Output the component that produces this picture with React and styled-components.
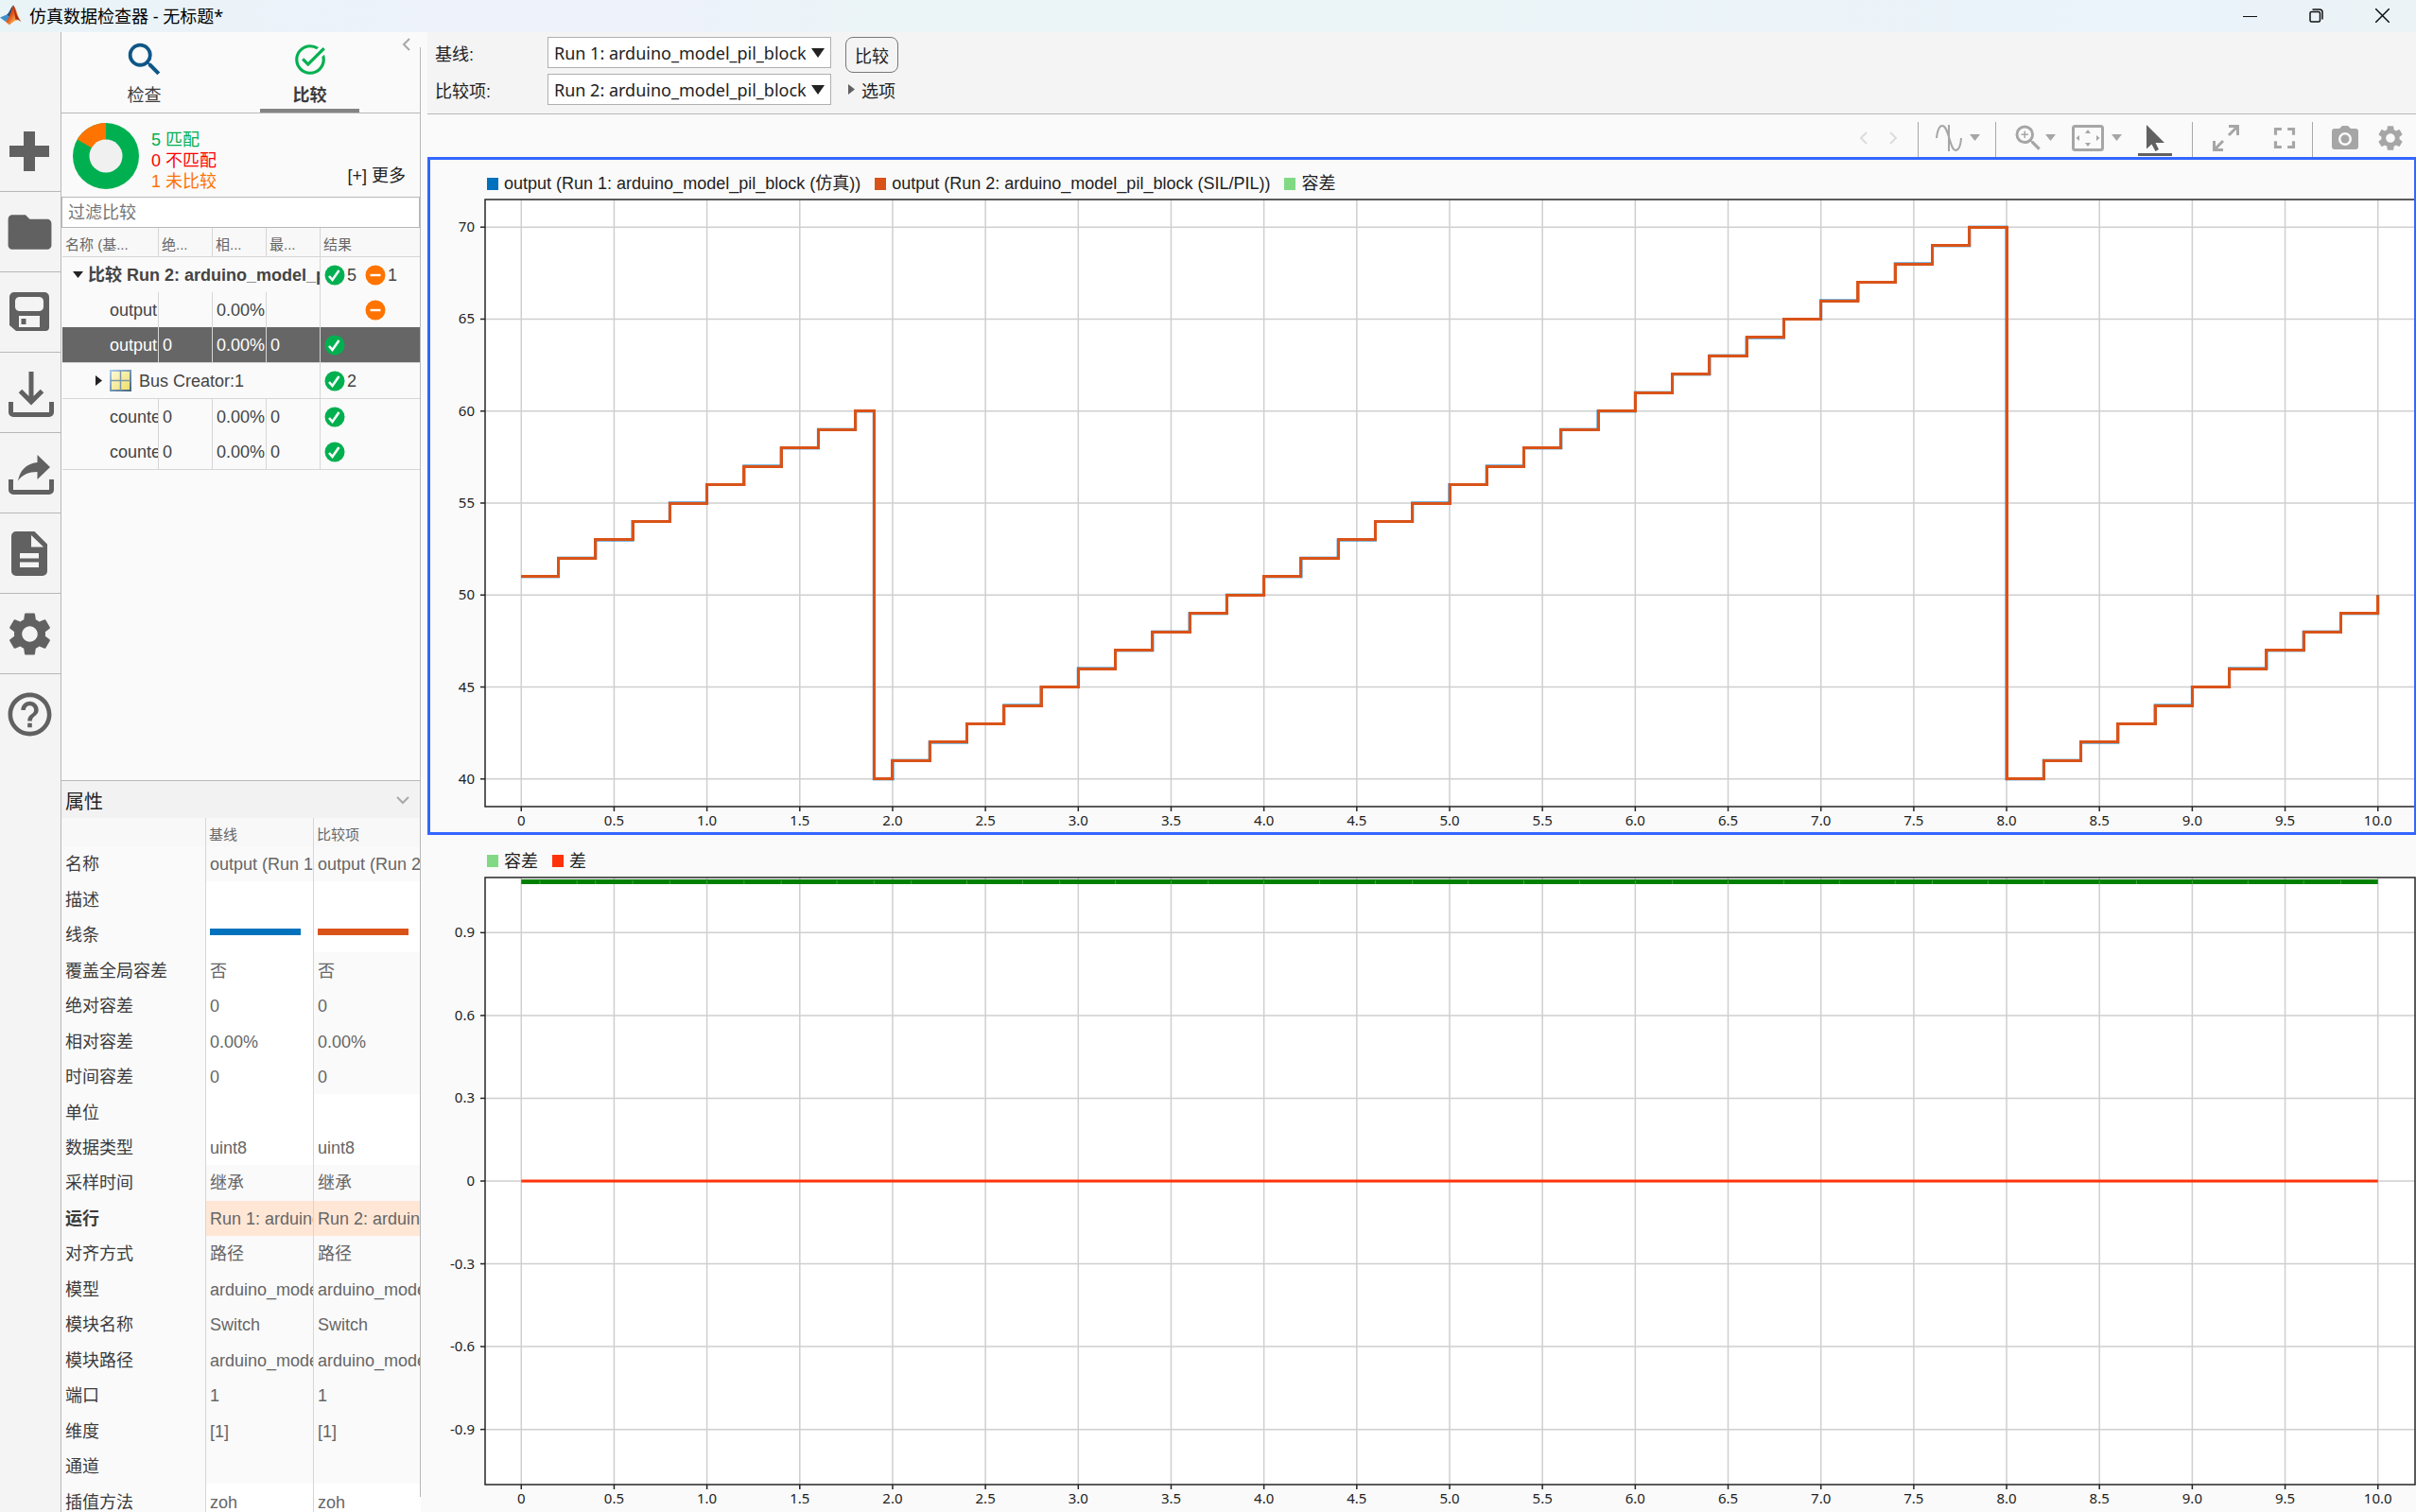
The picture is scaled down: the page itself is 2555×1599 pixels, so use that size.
import React, { useLayoutEffect, useRef, useState } from 'react';
import styled, { createGlobalStyle } from 'styled-components';
import { MdFolder, MdFullscreen, MdHelpOutline, MdSearch, MdSettings, MdTaskAlt, MdZoomIn } from 'react-icons/md';

const SANS = '"Liberation Sans", "Noto Sans CJK SC", sans-serif';
const UI = '"Noto Sans", "Noto Sans CJK SC", sans-serif';

const BLUE = '#0072bd';
const ORANGE = '#d95319';
const LIGHT_GREEN = '#81d984';
const RED = '#ff330a';

const properties = [
    { name: '名称', base: 'output (Run 1: arduino_model_pil_block)', other: 'output (Run 2: arduino_model_pil_block)' },
    { name: '描述', base: '', other: '', edit: 'both' },
    { name: '线条', line: true, edit: 'both' },
    { name: '覆盖全局容差', base: '否', other: '否', edit: 'base' },
    { name: '绝对容差', base: '0', other: '0', edit: 'base' },
    { name: '相对容差', base: '0.00%', other: '0.00%', edit: 'base' },
    { name: '时间容差', base: '0', other: '0', edit: 'base' },
    { name: '单位', base: '', other: '', edit: 'both' },
    { name: '数据类型', base: 'uint8', other: 'uint8', edit: 'both' },
    { name: '采样时间', base: '继承', other: '继承' },
    { name: '运行', base: 'Run 1: arduino_model_pil_block', other: 'Run 2: arduino_model_pil_block', differs: true },
    { name: '对齐方式', base: '路径', other: '路径' },
    { name: '模型', base: 'arduino_model_pil_block', other: 'arduino_model_pil_block' },
    { name: '模块名称', base: 'Switch', other: 'Switch' },
    { name: '模块路径', base: 'arduino_model_pil_block/Switch', other: 'arduino_model_pil_block/Switch' },
    { name: '端口', base: '1', other: '1' },
    { name: '维度', base: '[1]', other: '[1]' },
    { name: '通道', base: '', other: '' },
    { name: '插值方法', base: 'zoh', other: 'zoh', edit: 'both' },
];

// counter output as [time, value], held until the next point
const buildSteps = () => {
    const pts = [];
    for (let i = 0; i < 10; i++) pts.push([i * 0.2, 51 + i]);
    pts.push([1.9, 40]);
    for (let i = 0; i < 30; i++) pts.push([2 + i * 0.2, 41 + i]);
    for (let i = 0; i < 11; i++) pts.push([8 + i * 0.2, 40 + i]);
    return pts;
};
const steps = buildSteps();

const stepPath = (x, y) =>
    steps.map(([t, v], i) => (i === 0 ? `M${x(t)},${y(v)}` : `H${x(t)}V${y(v)}`)).join('');

// centre of the nearest pixel, keeps a 3px stroke crisp
const snap = (scale) => (v) => Math.floor(scale(v)) + 0.5;

/* ---------- icons ---------- */

const MatlabLogo = () => (
    <svg width="23" height="22" viewBox="0 0 23 22" aria-hidden="true">
        <defs>
            <linearGradient id="peak" x1="0" x2="1" y1="0" y2="1">
                <stop offset="0" stopColor="#7c1d12" />
                <stop offset="0.45" stopColor="#e4571b" />
                <stop offset="0.7" stopColor="#f7b052" />
                <stop offset="1" stopColor="#b02a12" />
            </linearGradient>
        </defs>
        <path d="M0 13.5 L7 10.5 L11 14 L6 18 Z" fill="#3f8fc9" />
        <path d="M7 10.5 C10 9 11 3 14 0.5 L11 14 Z" fill="#2b4f7d" />
        <path d="M14 0.5 C17 3 19 14 22.5 18 C19 14.500 15 17 10 21.500 L6 18 C10 15 12 6 14 0.5 Z" fill="url(#peak)" />
        <path d="M14 0.5 C15.500 3 17 12 22.5 18 C20 16 18 15 16.500 16 C15.500 10 15 5 14 0.5 Z" fill="#a52a14" />
    </svg>
);

const PlusIcon = () => (
    <svg width="42" height="42" viewBox="0 0 42 42" aria-hidden="true">
        <path d="M15 0h12v15h15v12H27v15H15V27H0V15h15z" fill="currentColor" />
    </svg>
);

const SaveIcon = () => (
    <svg width="42" height="42" viewBox="0 0 42 42" aria-hidden="true">
        <path
            fillRule="evenodd"
            fill="currentColor"
            d="M5 0h32a5 5 0 0 1 5 5v32a4 4 0 0 1-4 4H7l-7-6V5a5 5 0 0 1 5-5zM11 5a5 5 0 0 0-5 4v7a5 5 0 0 0 5 4h20a5 5 0 0 0 5-4V9a5 5 0 0 0-5-4zM10 25v12h22V25zM12.500 28h5v6h-5z"
        />
    </svg>
);

const ImportIcon = () => (
    <svg width="52" height="52" viewBox="-4 -4 52 52" fill="none" stroke="currentColor" aria-hidden="true">
        <path d="M2.500 32v11a2.500 2.500 0 0 0 2.500 2.500h38a2.500 2.500 0 0 0 2.500-2.500V32" strokeWidth="5" />
        <path d="M24 0v32M12.500 20.500L24 32l11.500-11.500" strokeWidth="5" />
    </svg>
);

const ExportIcon = () => (
    <svg width="52" height="46" viewBox="-4 -4 52 46" fill="none" aria-hidden="true">
        <path d="M2.500 26v11a2.500 2.500 0 0 0 2.500 2.500h38a2.500 2.500 0 0 0 2.500-2.500V26" strokeWidth="5" stroke="currentColor" />
        <path d="M30.500 0l13.500 13-13.500 13v-8c-9 0-16 3-20.500 9.500C12 17 18 9.500 30.500 8z" fill="currentColor" />
    </svg>
);

const ReportIcon = () => (
    <svg width="38" height="47" viewBox="0 0 38 47" aria-hidden="true">
        <path
            fillRule="evenodd"
            fill="currentColor"
            d="M5 0h19.500L38 13.500V42a5 5 0 0 1-5 5H5a5 5 0 0 1-5-5V5a5 5 0 0 1 5-5zM21 4v12.500h13zM9 23v5.500h20V23zM9 32.500V38h20v-5.500z"
        />
    </svg>
);

const CheckBadge = () => (
    <svg width="22" height="22" viewBox="0 0 22 22" role="img" aria-label="匹配">
        <circle cx="11" cy="11" r="10.5" fill="#00b050" />
        <path d="M5 12l3.500 4L15.500 6" fill="none" stroke="#fff" strokeWidth="2.600" />
    </svg>
);

const MinusBadge = () => (
    <svg width="22" height="22" viewBox="0 0 22 22" role="img" aria-label="未比较">
        <circle cx="11" cy="11" r="10.5" fill="#ff7300" />
        <path d="M5.500 11h11" stroke="#fff" strokeWidth="2.400" />
    </svg>
);

const BusIcon = () => (
    <svg width="23" height="23" viewBox="0 0 23 23" aria-hidden="true">
        <defs>
            <linearGradient id="bus" x1="0" x2="1" y1="0" y2="1">
                <stop offset="0" stopColor="#fdfbe0" />
                <stop offset="1" stopColor="#eedd60" />
            </linearGradient>
            <linearGradient id="busEdge" x1="0" x2="1" y1="0" y2="1">
                <stop offset="0" stopColor="#a9c8ea" />
                <stop offset="1" stopColor="#47687f" />
            </linearGradient>
        </defs>
        <rect x="1" y="1" width="21" height="21" fill="url(#bus)" stroke="url(#busEdge)" strokeWidth="2" />
        <path d="M11.500 1v21M1 11.500h21" stroke="#7d96a8" strokeWidth="1.500" />
    </svg>
);

const ArrowDown = () => (
    <svg width="11" height="7" viewBox="0 0 11 7" aria-hidden="true"><path d="M0 0h11L5.500 7z" fill="currentColor" /></svg>
);

const ArrowRight = () => (
    <svg width="7" height="11" viewBox="0 0 7 11" aria-hidden="true"><path d="M0 0v11l7-5.500z" fill="currentColor" /></svg>
);

const Chevron = ({ d, w, h, stroke = 2 }) => (
    <svg width={w} height={h} viewBox={`0 0 ${w} ${h}`} fill="none" stroke="currentColor" strokeWidth={stroke} aria-hidden="true">
        <path d={d} />
    </svg>
);

const WaveIcon = () => (
    <svg width="28" height="30" viewBox="0 0 28 30" fill="none" stroke="currentColor" strokeWidth="2" aria-hidden="true">
        <path d="M1 15C2 6 4 2 7 2c7 0 8 26 14 26 4 0 5.500-6 6-13M14 1v28" />
    </svg>
);

const FitIcon = () => (
    <svg width="34" height="28" viewBox="0 0 34 28" aria-hidden="true">
        <rect x="1.500" y="1.500" width="31" height="25" rx="2" fill="none" stroke="currentColor" strokeWidth="3" />
        <path d="M17 5l3 4h-6zM17 23l3-4h-6zM4.500 14l3.500-3v6zM29.500 14L26 11v6z" fill="currentColor" />
    </svg>
);

const CursorIcon = () => (
    <svg width="20" height="28" viewBox="-1 0 20 28" aria-hidden="true">
        <path d="M0 0v25.500l5.500-5 4 7.500 3.500-2-3.500-7H19z" fill="currentColor" />
    </svg>
);

const ExpandIcon = () => (
    <svg width="28" height="28" viewBox="0 0 28 28" fill="none" stroke="currentColor" strokeWidth="3" aria-hidden="true">
        <path d="M17 1.500h9.500V11M26 2l-9 9M1.500 17v9.500H11M2 26l9-9" />
    </svg>
);

const CameraIcon = () => (
    <svg width="28" height="26" viewBox="0 0 28 26" aria-hidden="true">
        <path
            fillRule="evenodd"
            fill="currentColor"
            d="M8 3l3-3h6l3 3h5a3 3 0 0 1 3 3v16a3 3 0 0 1-3 3H3a3 3 0 0 1-3-3V6a3 3 0 0 1 3-3zM14 7a7 7 0 1 0 0 14a7 7 0 1 0 0-14z"
        />
        <circle cx="14" cy="14" r="4.500" fill="currentColor" />
    </svg>
);

const Donut = () => (
    <svg width="70" height="70" viewBox="0 0 70 70" role="img" aria-label="5 匹配, 1 未比较">
        <circle cx="35" cy="35" r="35" fill="#00b050" />
        <path d="M35 35V0A35 35 0 0 0 4.690 17.500z" fill="#ff7300" />
        <circle cx="35" cy="35" r="17.500" fill="#f0f0f0" />
    </svg>
);

/* ---------- plots ---------- */

const useSize = () => {
    const ref = useRef(null);
    const [size, setSize] = useState([0, 0]);
    useLayoutEffect(() => {
        const measure = () => setSize([ref.current.clientWidth, ref.current.clientHeight]);
        measure();
        const observer = new ResizeObserver(measure);
        observer.observe(ref.current);
        return () => observer.disconnect();
    }, []);
    return [ref, size];
};

const xTicks = Array.from({ length: 21 }, (_, i) => i / 2);

const Plot = ({ min, max, ticks, children }) => {
    const [ref, [w, h]] = useSize();
    const left = 61;
    const right = w - 1;
    const top = 1;
    const bottom = h - 30;
    const x = (t) => left - 1 + ((t + 0.2) / 10.4) * (right - left + 1);
    const y = (v) => bottom - ((v - min) / (max - min)) * (bottom - top);

    return (
        <PlotArea ref={ref}>
            {w > 0 && (
                <svg width={w} height={h}>
                    <rect x={left} y={top} width={right - left} height={bottom - top} fill="#fff" />
                    <g stroke="#cfcfcf" strokeWidth="1.500">
                        {xTicks.map((t) => <line key={t} x1={x(t)} x2={x(t)} y1={top} y2={bottom} />)}
                        {ticks.map((v) => <line key={v} x1={left} x2={right} y1={y(v)} y2={y(v)} />)}
                    </g>
                    <rect x={left} y={top} width={right - left} height={bottom - top} fill="none" stroke="#262626" strokeWidth="1.500" />
                    {children(x, y)}
                    <g stroke="#262626" strokeWidth="1.500">
                        {xTicks.map((t) => <line key={t} x1={x(t)} x2={x(t)} y1={bottom} y2={bottom + 5} />)}
                        {ticks.map((v) => <line key={v} x1={left - 5} x2={left} y1={y(v)} y2={y(v)} />)}
                    </g>
                    {xTicks.map((t) => (
                        <TickText key={t} x={x(t)} y={bottom + 20} textAnchor="middle">{t === 0 ? '0' : t.toFixed(1)}</TickText>
                    ))}
                    {ticks.map((v) => (
                        <TickText key={v} x={left - 11} y={y(v) + 5} textAnchor="end">{v}</TickText>
                    ))}
                </svg>
            )}
        </PlotArea>
    );
};

const bandMarks = [0.1, 0.3, 0.4, 0.6, 0.8, 1, 1.2, 1.4, 1.7, 1.9, 2.1, 2.4, 2.7, 2.9, 3.2, 3.5, 3.7, 4, 4.3, 4.6, 4.8, 5.1, 5.4, 5.7, 6, 6.2, 6.5, 6.8, 7.1, 7.4, 7.6, 7.9, 8.2, 8.5, 8.7, 9, 9.3, 9.6, 9.8];

export default function App() {
    return (
        <>
            <GlobalStyle />
            <Window>
                <TitleBar>
                    <Title><MatlabLogo />仿真数据检查器 - 无标题*</Title>
                    <WindowButton aria-label="最小化"><Chevron d="M0 8.500h15" w={15} h={15} stroke={1} /></WindowButton>
                    <WindowButton aria-label="还原">
                        <svg width="15" height="15" viewBox="0 0 15 15" fill="none" stroke="#111" strokeWidth="1.500">
                            <rect x="1" y="3.500" width="10.500" height="10.500" rx="1.500" />
                            <path d="M3.500 1H11a3 3 0 0 1 3 3v7.500" />
                        </svg>
                    </WindowButton>
                    <WindowButton aria-label="关闭"><Chevron d="M0 0l15 15M15 0L0 15" w={15} h={15} stroke={1.5} /></WindowButton>
                </TitleBar>
                <Body>
                    <Rail>
                        <RailButton aria-label="新建"><PlusIcon /></RailButton>
                        <RailButton aria-label="打开"><MdFolder size={55} /></RailButton>
                        <RailButton aria-label="保存"><SaveIcon /></RailButton>
                        <RailButton aria-label="导入"><ImportIcon /></RailButton>
                        <RailButton aria-label="导出"><ExportIcon /></RailButton>
                        <RailButton aria-label="报告"><ReportIcon /></RailButton>
                        <RailButton aria-label="预设"><MdSettings size={55} /></RailButton>
                        <RailButton aria-label="帮助"><MdHelpOutline size={55} /></RailButton>
                    </Rail>
                    <SidePanel />
                    <Main>
                        <CompareBar />
                        <PlotToolbar />
                        <Plots>
                            <PlotCell $active>
                                <Legend>
                                    <LegendItem $color={BLUE}>output (Run 1: arduino_model_pil_block (仿真))</LegendItem>
                                    <LegendItem $color={ORANGE}>output (Run 2: arduino_model_pil_block (SIL/PIL))</LegendItem>
                                    <LegendItem $color={LIGHT_GREEN}>容差</LegendItem>
                                </Legend>
                                <Plot min={38.5} max={71.5} ticks={[40, 45, 50, 55, 60, 65, 70]}>
                                    {(x, y) => (
                                        <g fill="none" strokeWidth="3">
                                            <path d={stepPath(x, y)} stroke={BLUE} />
                                            <path d={stepPath(snap(x), snap(y))} stroke={ORANGE} />
                                        </g>
                                    )}
                                </Plot>
                            </PlotCell>
                            <PlotCell>
                                <Legend>
                                    <LegendItem $color={LIGHT_GREEN}>容差</LegendItem>
                                    <LegendItem $color={RED}>差</LegendItem>
                                </Legend>
                                <Plot min={-1.1} max={1.1} ticks={['-0.9', '-0.6', '-0.3', '0', '0.3', '0.6', '0.9']}>
                                    {(x, y) => (
                                        <>
                                            <rect x={x(0)} y={y(1.1) + 2} width={x(10) - x(0)} height="5" fill="#008000" />
                                            {bandMarks.map((t) => (
                                                <line key={t} x1={x(t)} x2={x(t)} y1={y(1.1) + 3} y2={y(1.1) + 7} stroke="#3f9f3f" />
                                            ))}
                                            <line x1={x(0)} x2={x(10)} y1={y(0)} y2={y(0)} stroke={RED} strokeWidth="3" />
                                        </>
                                    )}
                                </Plot>
                            </PlotCell>
                        </Plots>
                    </Main>
                </Body>
            </Window>
        </>
    );
}

function SidePanel() {
    return (
        <Side>
            <Tabs>
                <Tab $color="#0f5687"><MdSearch size={46} /><span>检查</span></Tab>
                <Tab $color="#00b050" $active><MdTaskAlt size={38} /><span>比较</span></Tab>
                <CollapseButton aria-label="折叠"><Chevron d="M8 1L2 7l6 6" w={9} h={14} /></CollapseButton>
            </Tabs>
            <Summary>
                <Donut />
                <Stats>
                    <Stat $color="#00b050">5 匹配</Stat>
                    <Stat $color="#ff0000">0 不匹配</Stat>
                    <Stat $color="#ff7300">1 未比较</Stat>
                </Stats>
                <MoreButton>[+] 更多</MoreButton>
            </Summary>
            <FilterInput type="text" placeholder="过滤比较" aria-label="过滤比较" />
            <RunsPane>
                <RunsTable>
                    <colgroup>
                        <col width="102" /><col width="57" /><col width="57" /><col width="57" /><col />
                    </colgroup>
                    <thead>
                        <tr>
                            <HeadCell>名称 (基...</HeadCell>
                            <HeadCell>绝...</HeadCell>
                            <HeadCell>相...</HeadCell>
                            <HeadCell>最...</HeadCell>
                            <HeadCell>结果</HeadCell>
                        </tr>
                    </thead>
                    <tbody>
                        <RunRow>
                            <RunCell colSpan={4}>
                                <TreeLabel $indent={11} $gap={5} $bold><ArrowDown />比较 Run 2: arduino_model_pil_block</TreeLabel>
                            </RunCell>
                            <RunCell><Results><CheckBadge /><b>5</b><MinusBadge /><b>1</b></Results></RunCell>
                        </RunRow>
                        <RunRow>
                            <RunCell><TreeLabel $indent={50}>output</TreeLabel></RunCell>
                            <RunCell />
                            <RunCell>0.00%</RunCell>
                            <RunCell />
                            <RunCell><Results><i /><b /><MinusBadge /></Results></RunCell>
                        </RunRow>
                        <RunRow $selected $line>
                            <RunCell><TreeLabel $indent={50}>output</TreeLabel></RunCell>
                            <RunCell>0</RunCell>
                            <RunCell>0.00%</RunCell>
                            <RunCell>0</RunCell>
                            <RunCell><Results><CheckBadge /></Results></RunCell>
                        </RunRow>
                        <RunRow $line>
                            <RunCell colSpan={4}>
                                <TreeLabel $indent={35} $gap={8}><ArrowRight /><BusIcon />Bus Creator:1</TreeLabel>
                            </RunCell>
                            <RunCell><Results><CheckBadge /><b>2</b></Results></RunCell>
                        </RunRow>
                        {['counter', 'counter'].map((name, i) => (
                            <RunRow key={i} $line={i === 1}>
                                <RunCell><TreeLabel $indent={50}>{name}</TreeLabel></RunCell>
                                <RunCell>0</RunCell>
                                <RunCell>0.00%</RunCell>
                                <RunCell>0</RunCell>
                                <RunCell><Results><CheckBadge /></Results></RunCell>
                            </RunRow>
                        ))}
                    </tbody>
                </RunsTable>
            </RunsPane>
            <PropsPane>
                <PropsTitle>
                    属性
                    <IconButton aria-label="折叠属性"><Chevron d="M1 1l6 6 6-6" w={14} h={9} /></IconButton>
                </PropsTitle>
                <PropsTable>
                    <colgroup><col width="153" /><col width="114" /><col /></colgroup>
                    <thead>
                        <tr><HeadCell /><HeadCell>基线</HeadCell><HeadCell>比较项</HeadCell></tr>
                    </thead>
                    <tbody>
                        {properties.map((p) => (
                            <tr key={p.name}>
                                <PropName $bold={p.differs}>{p.name}</PropName>
                                <PropValue $edit={!!p.edit} $differs={p.differs}>
                                    {p.line ? <LineSample $color={BLUE} /> : p.base}
                                </PropValue>
                                <PropValue $edit={p.edit === 'both'} $differs={p.differs}>
                                    {p.line ? <LineSample $color={ORANGE} /> : p.other}
                                </PropValue>
                            </tr>
                        ))}
                    </tbody>
                </PropsTable>
            </PropsPane>
        </Side>
    );
}

function CompareBar() {
    return (
        <Bar>
            <label htmlFor="baseline">基线:</label>
            <SelectBox>
                <Select id="baseline"><option>Run 1: arduino_model_pil_block</option></Select>
                <svg width="14" height="10" viewBox="0 0 14 10"><path d="M0 0h14L7 10z" fill="#222" /></svg>
            </SelectBox>
            <CompareButton>比较</CompareButton>
            <label htmlFor="compareTo">比较项:</label>
            <SelectBox>
                <Select id="compareTo"><option>Run 2: arduino_model_pil_block</option></Select>
                <svg width="14" height="10" viewBox="0 0 14 10"><path d="M0 0h14L7 10z" fill="#222" /></svg>
            </SelectBox>
            <OptionsButton><ArrowRight />选项</OptionsButton>
        </Bar>
    );
}

function PlotToolbar() {
    return (
        <Toolbar>
            <ToolGroup $gap={23} $pad={21}>
                <ToolButton aria-label="上一个" disabled><Chevron d="M8 1L2 7l6 6" w={9} h={14} /></ToolButton>
                <ToolButton aria-label="下一个" disabled><Chevron d="M1 1l6 6-6 6" w={9} h={14} /></ToolButton>
            </ToolGroup>
            <ToolGroup $pad={18} $end={16}>
                <ToolButton aria-label="游标"><WaveIcon /><Spacer /><ArrowDown /></ToolButton>
            </ToolGroup>
            <ToolGroup $gap={17} $pad={16} $end={21}>
                <ToolButton aria-label="缩放"><MdZoomIn size={36} /><ArrowDown /></ToolButton>
                <ToolButton aria-label="适应视图"><FitIcon /><Spacer /><ArrowDown /></ToolButton>
                <ToolButton aria-label="选择" $active><CursorIcon /></ToolButton>
            </ToolGroup>
            <ToolGroup $gap={29} $pad={21} $end={10}>
                <ToolButton aria-label="展开"><ExpandIcon /></ToolButton>
                <ToolButton aria-label="全屏"><MdFullscreen size={38} /></ToolButton>
            </ToolGroup>
            <ToolGroup $gap={18} $pad={20} $end={11}>
                <ToolButton aria-label="快照"><CameraIcon /></ToolButton>
                <ToolButton aria-label="设置"><MdSettings size={32} /></ToolButton>
            </ToolGroup>
        </Toolbar>
    );
}

const GlobalStyle = createGlobalStyle`
    *{
        box-sizing:border-box;
    }
    html, body, #root{
        height:100%;
        margin:0;
        overflow:hidden;
    }
    body{
        font-family:${SANS};
        font-size:18px;
        color:#222;
        background:#fafafa;
    }
    button{
        border:none;
        padding:0;
        background:none;
        font:inherit;
        color:inherit;
    }
    svg{
        display:block;
        flex:none;
    }
`;

const Window = styled.div`
    display:flex;
    flex-direction:column;
    height:100vh;
`;

const TitleBar = styled.header`
    display:flex;
    flex:none;
    height:34px;
    padding:0 1px 2px 0;
    background:linear-gradient(90deg, #e9f4f7 0%, #edf2fb 18%, #edf2fb 28%, #ebf4f7 36%, #ebf4f7 60%, #ebf3fb 90%, #ebf3f6 100%);
`;

const Title = styled.div`
    display:flex;
    align-items:center;
    gap:8px;
    flex:1;
    font-family:${UI};
    color:#000;
`;

const WindowButton = styled.button`
    display:flex;
    align-items:center;
    justify-content:center;
    width:70px;
    color:#111;
`;

const Body = styled.div`
    display:flex;
    flex:1;
    min-height:0;
`;

const Rail = styled.nav`
    display:flex;
    flex-direction:column;
    flex:none;
    width:65px;
    padding-top:84px;
    background:#f4f4f4;
    border-right:1px solid #b8b8b8;
`;

const RailButton = styled.button`
    display:flex;
    align-items:center;
    justify-content:center;
    height:85px;
    padding-right:2px;
    color:#616161;
    border-bottom:1px solid #b8b8b8;

    &:last-child{
        border-bottom:none;
    }
`;

const Side = styled.aside`
    position:relative;
    display:flex;
    flex-direction:column;
    flex:none;
    width:380px;
    margin-right:7px;
    background:#fafafa;

    /* splitter line */
    &::after{
        content:"";
        position:absolute;
        top:16px;
        right:0;
        bottom:16px;
        width:1px;
        background:#b8b8b8;
    }
`;

const Tabs = styled.div`
    display:flex;
    flex:none;
    height:86px;
    border-bottom:1px solid #b8b8b8;
`;

const Tab = styled.button`
    display:flex;
    flex-direction:column;
    align-items:center;
    justify-content:space-between;
    width:105px;
    margin:0 35px;
    border-bottom:4px solid ${(props) => (props.$active ? '#848484' : 'transparent')};
    color:#3c3c3c;
    font-weight:${(props) => (props.$active ? 700 : 400)};

    svg{
        height:46px;
        margin-top:6px;
        color:${(props) => props.$color};
    }
    span{
        line-height:28px;
    }
`;

const IconButton = styled.button`
    color:#a8a8a8;
`;

const CollapseButton = styled(IconButton)`
    align-self:flex-start;
    margin:6px 11px 0 -24px;
    margin-left:auto;
`;

const Summary = styled.div`
    display:flex;
    align-items:center;
    flex:none;
    height:88px;
    padding:2px 16px 0 12px;
`;

const Stats = styled.div`
    flex:1;
    padding:10px 0 0 13px;
`;

const Stat = styled.div`
    line-height:22px;
    color:${(props) => props.$color};
`;

const MoreButton = styled.button`
    align-self:flex-end;
    line-height:44px;
`;

const FilterInput = styled.input`
    flex:none;
    height:33px;
    margin:0 1px 0 0;
    padding:2px 6px 0;
    border:1px solid #b8b8b8;
    font:inherit;
    background:#fff;

    &::placeholder{
        color:#757575;
    }
`;

const RunsPane = styled.div`
    flex:1;
    min-height:0;
    padding:0 1px;
    overflow:hidden;
`;

const RunsTable = styled.table`
    width:100%;
    height:256px;
    table-layout:fixed;
    border-collapse:separate;
    border-spacing:0;
    color:#444;
`;

const HeadCell = styled.th`
    height:31px;
    padding:5px 0 0 3px;
    border-right:1px solid #d6d6d6;
    border-bottom:1px solid #d6d6d6;
    background:#f8f8f8;
    font-size:15px;
    font-weight:400;
    line-height:20px;
    text-align:left;
    white-space:nowrap;
    color:#666;

    &:last-child{
        border-right:none;
    }
`;

const RunCell = styled.td`
    padding:1px 0 0 4px;
    border-right:1px solid #d6d6d6;
    overflow:hidden;
    white-space:nowrap;
    line-height:24px;

    &:first-child{
        padding-left:0;
    }
    &:last-child{
        border-right:none;
    }
`;

const RunRow = styled.tr`
    background:${(props) => (props.$selected ? '#666' : 'none')};
    color:${(props) => (props.$selected ? '#fff' : 'inherit')};

    ${RunCell}{
        border-bottom:${(props) => (props.$line ? '1px solid #d6d6d6' : 'none')};
    }
`;

const TreeLabel = styled.div`
    display:flex;
    align-items:center;
    gap:${(props) => props.$gap || 0}px;
    padding-left:${(props) => props.$indent}px;
    font-weight:${(props) => (props.$bold ? 700 : 400)};

    svg:first-child{
        color:#222;
    }
`;

const Results = styled.div`
    display:flex;
    align-items:center;

    i{
        width:22px;
    }
    b{
        width:21px;
        padding-left:2px;
        font-weight:400;
    }
`;

const PropsPane = styled.section`
    flex:none;
    height:774px;
    overflow:hidden;
`;

const PropsTitle = styled.h2`
    display:flex;
    align-items:center;
    justify-content:space-between;
    height:40px;
    margin:0;
    padding:2px 12px 0 4px;
    border-top:1px solid #b8b8b8;
    background:#f2f2f2;
    font-size:20px;
    font-weight:400;
`;

const PropsTable = styled.table`
    width:100%;
    height:742px;
    table-layout:fixed;
    border-collapse:separate;
    border-spacing:0;

    ${HeadCell}{
        height:30px;
        border-bottom:none;
    }
`;

const PropName = styled.th`
    padding:1px 0 0 4px;
    border-right:1px solid #d6d6d6;
    font-weight:${(props) => (props.$bold ? 700 : 400)};
    line-height:24px;
    text-align:left;
    color:#3c3c3c;
`;

const PropValue = styled.td`
    padding:1px 0 0 4px;
    border-right:1px solid #d6d6d6;
    overflow:hidden;
    white-space:nowrap;
    line-height:24px;
    color:#666;
    background:${(props) => (props.$differs ? '#ffe6d5' : props.$edit ? '#fff' : '#fafafa')};

    &:last-child{
        border-right:none;
    }
`;

const LineSample = styled.div`
    width:96px;
    height:7px;
    margin-bottom:8px;
    background:${(props) => props.$color};
`;

const Main = styled.main`
    display:flex;
    flex-direction:column;
    flex:1;
    min-width:0;
`;

const Bar = styled.form`
    display:grid;
    grid-template-columns:119px 300px auto;
    grid-auto-rows:33px;
    row-gap:6px;
    align-items:center;
    flex:none;
    height:87px;
    padding:5px 0 0 8px;
    background:#f4f4f4;
    border-bottom:1px solid #b8b8b8;
`;

const SelectBox = styled.div`
    position:relative;

    svg{
        position:absolute;
        top:12px;
        right:7px;
        pointer-events:none;
    }
`;

const Select = styled.select`
    display:block;
    width:100%;
    height:33px;
    padding:0 20px 0 6px;
    appearance:none;
    border:1px solid #b0b0b0;
    border-radius:0;
    background:#fff;
    font-family:${UI};
    font-size:18px;
    color:#222;
`;

const CompareButton = styled.button`
    align-self:start;
    justify-self:start;
    width:56px;
    height:38px;
    margin-left:15px;
    border:1px solid #777;
    border-radius:8px;
`;

const OptionsButton = styled.button`
    display:flex;
    align-items:center;
    justify-self:start;
    gap:7px;
    margin-left:18px;

    svg{
        color:#616161;
    }
`;

const Toolbar = styled.div`
    display:flex;
    justify-content:flex-end;
    flex:none;
    height:45px;
    padding-top:8px;
`;

const ToolGroup = styled.div`
    display:flex;
    gap:${(props) => props.$gap || 0}px;
    padding:0 ${(props) => props.$end || props.$pad}px 0 ${(props) => props.$pad}px;
    border-left:1px solid #a8a8a8;

    &:first-child{
        border-left:none;
    }
`;

const ToolButton = styled.button`
    display:flex;
    align-items:center;
    justify-content:center;
    height:36px;
    min-width:${(props) => (props.$active ? 36 : 0)}px;
    border-bottom:3px solid ${(props) => (props.$active ? '#616161' : 'transparent')};
    color:${(props) => (props.$active ? '#616161' : '#a6a6a6')};

    &:disabled{
        color:#dcdcdc;
    }
`;

const Spacer = styled.span`
    width:8px;
`;

const Plots = styled.div`
    display:grid;
    grid-template-rows:1fr 1fr;
    flex:1;
    min-height:0;
`;

const PlotCell = styled.section`
    position:relative;
    display:flex;
    flex-direction:column;
    min-height:0;

    /* selection frame, drawn over the plot */
    &::after{
        content:"";
        position:absolute;
        inset:0;
        border:3px solid ${(props) => (props.$active ? '#3366ff' : 'transparent')};
        border-right-width:2px;
        pointer-events:none;
    }
`;

const Legend = styled.div`
    display:flex;
    gap:15px;
    flex:none;
    height:44px;
    padding:18px 0 0 63px;
    line-height:20px;
`;

const LegendItem = styled.div`
    display:flex;
    align-items:center;
    height:20px;
    gap:6px;
    white-space:nowrap;

    &::before{
        content:"";
        width:12px;
        height:13px;
        background:${(props) => props.$color};
    }
`;

const PlotArea = styled.div`
    flex:1;
    min-height:0;
    overflow:hidden;
`;

const TickText = styled.text`
    font-family:${UI};
    font-size:15px;
    fill:#222;
`;
